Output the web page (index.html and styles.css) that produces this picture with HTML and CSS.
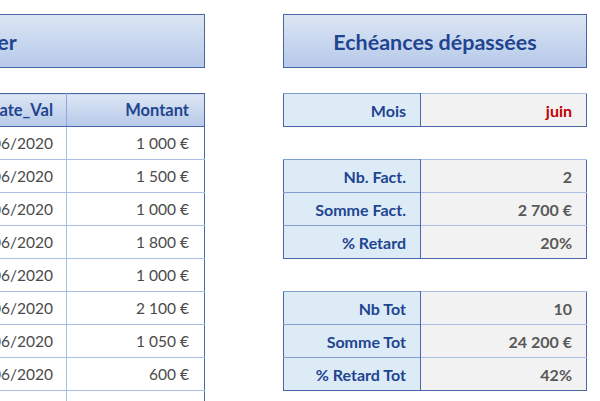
FILE: index.html
```html
<!DOCTYPE html>
<html lang="fr">
<head>
<meta charset="utf-8">
<title>Echéances</title>
<link rel="stylesheet" href="styles.css">
</head>
<body>
<div class="sheet">
  <section class="left">
    <div class="title">Factures à payer</div>
    <table class="data">
      <thead>
        <tr><th class="c-date">Date_Val</th><th class="c-amt">Montant</th></tr>
      </thead>
      <tbody>
        <tr><td class="c-date">05/06/2020</td><td class="c-amt">1 000 €</td></tr>
        <tr><td class="c-date">08/06/2020</td><td class="c-amt">1 500 €</td></tr>
        <tr><td class="c-date">10/06/2020</td><td class="c-amt">1 000 €</td></tr>
        <tr><td class="c-date">12/06/2020</td><td class="c-amt">1 800 €</td></tr>
        <tr><td class="c-date">15/06/2020</td><td class="c-amt">1 000 €</td></tr>
        <tr><td class="c-date">18/06/2020</td><td class="c-amt">2 100 €</td></tr>
        <tr><td class="c-date">22/06/2020</td><td class="c-amt">1 050 €</td></tr>
        <tr><td class="c-date">25/06/2020</td><td class="c-amt">600 €</td></tr>
        <tr><td class="c-date">29/06/2020</td><td class="c-amt">2 000 €</td></tr>
      </tbody>
    </table>
  </section>
  <section class="right">
    <div class="title">Echéances dépassées</div>
    <table class="stat mois">
      <tr><th>Mois</th><td class="red">juin</td></tr>
    </table>
    <table class="stat">
      <tr><th>Nb. Fact.</th><td>2</td></tr>
      <tr><th>Somme Fact.</th><td>2 700 €</td></tr>
      <tr><th>% Retard</th><td>20%</td></tr>
    </table>
    <table class="stat">
      <tr><th>Nb Tot</th><td>10</td></tr>
      <tr><th>Somme Tot</th><td>24 200 €</td></tr>
      <tr><th>% Retard Tot</th><td>42%</td></tr>
    </table>
  </section>
</div>
</body>
</html>
```

FILE: styles.css
```css
html, body {
  margin: 0;
  padding: 0;
  background: #ffffff;
  overflow: hidden;
}
body {
  font-family: Lato, "Open Sans", sans-serif;
  width: 600px;
  height: 401px;
}
.sheet {
  display: flex;
  gap: 78px;
  padding-top: 14px;
  height: 387px;
  overflow: hidden;
}
.left {
  width: 532px;
  margin-left: -327px;
  flex: none;
}
.right {
  width: 304px;
  flex: none;
}
.title {
  box-sizing: border-box;
  height: 54px;
  border: 1px solid #4a66a6;
  background: linear-gradient(#dce6f4, #b6c9e9);
  color: #1f4590;
  font-weight: 700;
  font-size: 21.5px;
  display: flex;
  align-items: center;
  justify-content: center;
  padding-top: 2px;
}
table {
  border-collapse: collapse;
  width: 100%;
  font-size: 16px;
}
.data {
  margin-top: 25px;
  border: 1px solid #4a66a6;
}
.data th {
  height: 32px;
  padding: 0 14px;
  text-align: right;
  color: #1f4590;
  font-weight: 700;
  font-size: 16.5px;
  background: linear-gradient(#dce6f4, #b6c9e9);
  border-bottom: 1px solid #4a66a6;
  border-left: 1px solid #8eaadb;
}
.data td {
  height: 32px;
  padding: 0 15px 0 14px;
  text-align: right;
  color: #4a4a4a;
  font-size: 15.5px;
  border-top: 1px solid #a9bfe3;
  border-left: 1px solid #a9bfe3;
}
.data .c-date { padding-right: 13px; }
.data .c-amt { width: 138px; box-sizing: border-box; }
.data th.c-amt { padding-right: 15px; }
.stat {
  border: 1px solid #4a66a6;
  margin-top: 25px;
}
.stat + .stat {
  margin-top: 32px;
}
.stat th {
  width: 137px;
  box-sizing: border-box;
  height: 32px;
  padding: 0 14px 0 0;
  text-align: right;
  background: #ddebf7;
  color: #1f4590;
  font-weight: 700;
  border-right: 1px solid #4a66a6;
  border-top: 1px solid #7f9fd0;
}
.stat td {
  height: 32px;
  padding: 0 14px 0 0;
  text-align: right;
  background: #f2f2f2;
  color: #595959;
  font-weight: 700;
  border-top: 1px solid #a9bfe3;
}
.stat td.red {
  color: #c00000;
}
```
